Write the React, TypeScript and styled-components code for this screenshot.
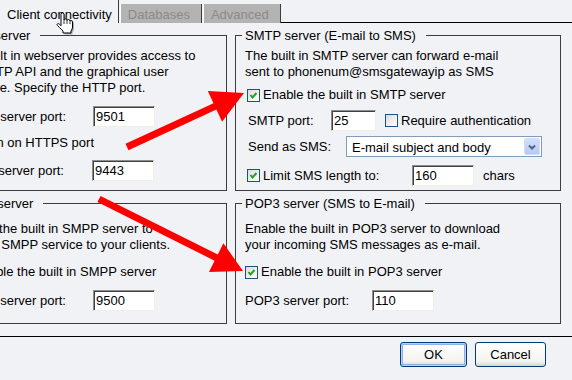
import React from "react";
import styled, { createGlobalStyle } from "styled-components";

const GlobalStyle = createGlobalStyle`
  html, body {
    margin: 0;
    padding: 0;
  }
  body {
    background: #f1f2f6;
    font-family: "Liberation Sans", Arial, sans-serif;
    font-size: 13px;
    color: #000;
  }
`;

const Screen = styled.div`
  position: relative;
  width: 572px;
  height: 380px;
  overflow: hidden;
`;

// the dialog is wider than the window; its left edge is cropped
const Dialog = styled.div`
  margin-left: -53px;
  width: 625px;
  display: flex;
  flex-direction: column;
`;

const TabStrip = styled.div`
  display: flex;
  align-items: flex-end;
  height: 23px;
  padding-left: 51px;
`;

const Tab = styled.div<{ $active?: boolean }>`
  box-sizing: border-box;
  height: ${(p) => (p.$active ? 23 : 19)}px;
  padding: ${(p) => (p.$active ? "0 6px 1px 8px" : "0 11px 1px 7px")};
  margin-left: ${(p) => (p.$active ? 0 : 1)}px;
  display: flex;
  align-items: flex-end;
  line-height: 14px;
  white-space: nowrap;
  background: ${(p) => (p.$active ? "#f1f2f6" : "#b3b3b3")};
  color: ${(p) => (p.$active ? "#000" : "#8a8a8a")};
  border-left: 1px solid #fff;
  border-right: 1px solid #3c3c3c;
`;

const TabLine = styled.div`
  flex: 1;
  align-self: stretch;
  border-bottom: 1px solid #000;
`;

const TabPage = styled.div`
  padding: 5px 0 12px;
  border-bottom: 1px solid #000;
`;

const Grid = styled.div`
  display: grid;
  grid-template-columns: 280px 326px;
  grid-template-rows: 163px 128px;
  column-gap: 8px;
  row-gap: 5px;
`;

const Group = styled.fieldset`
  margin: 0;
  min-width: 0;
  border: 1px solid #3c3c3c;
  padding: 5px 9px 3px;
  display: flex;
  flex-direction: column;
  align-items: flex-start;
`;

const Legend = styled.legend`
  line-height: 15px;
  padding: 0 10px 0 3px;
  margin-left: -3px;
  white-space: nowrap;
`;

const Desc = styled.div<{ $mt?: number; $shift?: number }>`
  margin-top: ${(p) => p.$mt ?? 0}px;
  margin-left: ${(p) => p.$shift ?? 0}px;
  line-height: 16px;
  white-space: nowrap;
`;

const Row = styled.div<{ $mt?: number; $indent?: number }>`
  display: flex;
  align-items: center;
  margin-top: ${(p) => p.$mt ?? 0}px;
  margin-left: ${(p) => p.$indent ?? 0}px;
  line-height: 16px;
  white-space: nowrap;
`;

const Label = styled.span<{ $w?: number }>`
  flex: none;
  width: ${(p) => (p.$w ? `${p.$w}px` : "auto")};
`;

const Box = styled.span<{ $ml?: number }>`
  box-sizing: border-box;
  flex: none;
  width: 13px;
  height: 13px;
  margin: 0 3px 0 ${(p) => p.$ml ?? 0}px;
  border: 1px solid #1c5180;
  background: linear-gradient(135deg, #dcdcd7, #ffffff);
  display: inline-flex;
  align-items: center;
  justify-content: center;
`;

const Field = styled.input<{ $w: number }>`
  box-sizing: border-box;
  width: ${(p) => p.$w}px;
  height: 21px;
  margin: 0;
  padding: 0 2px;
  font: 13px "Liberation Sans", Arial, sans-serif;
  color: #000;
  background: #fff;
  border: 1px solid;
  border-color: #8d8d8d #f1efe2 #f1efe2 #8d8d8d;
  box-shadow: inset 1px 1px 0 #404040;
  outline: none;
`;

const Select = styled.div`
  box-sizing: border-box;
  width: 196px;
  height: 21px;
  border: 1px solid #7f9db9;
  background: #fff;
  display: flex;
  align-items: stretch;
  padding: 1px;
`;

const SelectText = styled.span`
  flex: 1;
  padding-left: 4px;
  line-height: 19px;
`;

const DropButton = styled.span`
  box-sizing: border-box;
  width: 16px;
  border: 1px solid #d2ddf9;
  border-radius: 2px;
  background: linear-gradient(#d3def9, #b6c9f4);
  display: flex;
  align-items: center;
  justify-content: center;
`;

const Suffix = styled.span`
  margin-left: 9px;
`;

const ButtonRow = styled.div`
  display: flex;
  justify-content: flex-end;
  gap: 8px;
  padding: 5px 26px 0 0;
`;

const Button = styled.button<{ $w: number; $default?: boolean }>`
  box-sizing: border-box;
  width: ${(p) => p.$w}px;
  height: 25px;
  padding: 0;
  font: 13px "Liberation Sans", Arial, sans-serif;
  color: #000;
  border: 1px solid #003c74;
  border-radius: 3px;
  background: linear-gradient(#ffffff, #f3f3ef 80%, #d8d4c8);
  box-shadow: ${(p) =>
    p.$default ? "inset 0 0 0 1px #b9d1fa, inset 0 0 0 2px #8fb0e8" : "none"};
`;

const Overlay = styled.svg`
  position: absolute;
  left: 0;
  top: 0;
  pointer-events: none;
`;

const Cursor = styled.svg`
  position: absolute;
  left: 56px;
  top: 12px;
  pointer-events: none;
`;

function Check({ checked, ml }: { checked?: boolean; ml?: number }) {
  return (
    <Box $ml={ml}>
      {checked && (
        <svg width="9" height="9" viewBox="0 0 9 9">
          <polyline points="1.5,4 3.5,6.5 7.5,2" fill="none" stroke="#21a121" strokeWidth="2" />
        </svg>
      )}
    </Box>
  );
}

function App() {
  return (
    <Screen>
      <GlobalStyle />
      <Dialog>
        <TabStrip>
          <Tab $active>Client connectivity</Tab>
          <Tab>Databases</Tab>
          <Tab>Advanced</Tab>
          <TabLine />
        </TabStrip>
        <TabPage>
          <Grid>
            <Group>
              <Legend>HTTP server</Legend>
              <Desc>
                The built in webserver provides access to
                <br />
                the HTTP API and the graphical user
                <br />
                interface. Specify the HTTP port.
              </Desc>
              <Row $mt={10} $indent={6}>
                <Label $w={130}>HTTP server port:</Label>
                <Field $w={62} readOnly defaultValue="9501" />
              </Row>
              <Row $mt={8}>
                <Check ml={-4} checked />
                <Label>Listen on HTTPS port</Label>
              </Row>
              <Row $mt={9} $indent={-5}>
                <Label $w={140}>HTTPS server port:</Label>
                <Field $w={62} readOnly defaultValue="9443" />
              </Row>
            </Group>

            <Group>
              <Legend>SMTP server (E-mail to SMS)</Legend>
              <Desc>
                The built in SMTP server can forward e-mail
                <br />
                sent to phonenum@smsgatewayip as SMS
              </Desc>
              <Row $mt={7}>
                <Check ml={2} checked />
                <Label>Enable the built in SMTP server</Label>
              </Row>
              <Row $mt={7} $indent={3}>
                <Label $w={83}>SMTP port:</Label>
                <Field $w={45} readOnly defaultValue="25" />
                <Check ml={9} />
                <Label>Require authentication</Label>
              </Row>
              <Row $mt={5} $indent={3}>
                <Label $w={98}>Send as SMS:</Label>
                <Select>
                  <SelectText>E-mail subject and body</SelectText>
                  <DropButton>
                    <svg width="8" height="6" viewBox="0 0 8 6">
                      <polyline points="1,1.5 4,4.5 7,1.5" fill="none" stroke="#4d6185" strokeWidth="2" />
                    </svg>
                  </DropButton>
                </Select>
              </Row>
              <Row $mt={8}>
                <Check ml={2} checked />
                <Label $w={149}>Limit SMS length to:</Label>
                <Field $w={62} readOnly defaultValue="160" />
                <Suffix>chars</Suffix>
              </Row>
            </Group>

            <Group>
              <Legend>SMPP server</Legend>
              <Desc $mt={5} $shift={-2}>
                Enable the built in SMPP server to
                <br />
                provide SMPP service to your clients.
              </Desc>
              <Row $mt={11}>
                <Check checked />
                <Label>Enable the built in SMPP server</Label>
              </Row>
              <Row $mt={10} $indent={3}>
                <Label $w={133}>SMPP server port:</Label>
                <Field $w={62} readOnly defaultValue="9500" />
              </Row>
            </Group>

            <Group>
              <Legend>POP3 server (SMS to E-mail)</Legend>
              <Desc $mt={5}>
                Enable the built in POP3 server to download
                <br />
                your incoming SMS messages as e-mail.
              </Desc>
              <Row $mt={11}>
                <Check checked />
                <Label>Enable the built in POP3 server</Label>
              </Row>
              <Row $mt={10}>
                <Label $w={127}>POP3 server port:</Label>
                <Field $w={62} readOnly defaultValue="110" />
              </Row>
            </Group>
          </Grid>
        </TabPage>
        <ButtonRow>
          <Button $w={67} $default>OK</Button>
          <Button $w={71}>Cancel</Button>
        </ButtonRow>
      </Dialog>

      <Overlay width="572" height="380" viewBox="0 0 572 380">
        <polygon
          fill="#ff0000"
          points="125.5,143.8 213.5,103.2 207.8,91 244,93 222.1,121.8 216.4,109.6 128.5,150.2"
        />
        <polygon
          fill="#ff0000"
          points="100.6,195.9 217.8,254.5 223.4,243.3 243,271 209,271.9 214.6,260.7 97.4,202.1"
        />
      </Overlay>

      <Cursor width="20" height="24" viewBox="0 0 20 24">
        <path
          transform="translate(1.5 1.5)"
          fill="rgba(0,0,0,0.3)"
          d="M5 2.5Q5 1 6.5 1Q8 1 8 2.5V8Q8 7 9.5 7Q11 7 11 8.5Q11 7.5 12.5 7.5Q14 7.5 14 9Q14 8.5 15.2 8.5Q16.5 8.5 16.5 10V15Q16.5 17 15 19V21H7V19Q5 17 3.5 15.5L1.5 13.5Q0.5 12.5 1.5 11.8Q2.5 11.2 3.5 12.2L5 13.7Z"
        />
        <path
          fill="#fff"
          stroke="#000"
          strokeWidth="1"
          d="M5 2.5Q5 1 6.5 1Q8 1 8 2.5V8Q8 7 9.5 7Q11 7 11 8.5Q11 7.5 12.5 7.5Q14 7.5 14 9Q14 8.5 15.2 8.5Q16.5 8.5 16.5 10V15Q16.5 17 15 19V21H7V19Q5 17 3.5 15.5L1.5 13.5Q0.5 12.5 1.5 11.8Q2.5 11.2 3.5 12.2L5 13.7Z"
        />
        <path d="M8 8V12M11 8.5V12M14 9V12" stroke="#000" strokeWidth="0.8" fill="none" />
      </Cursor>
    </Screen>
  );
}

export default App;
